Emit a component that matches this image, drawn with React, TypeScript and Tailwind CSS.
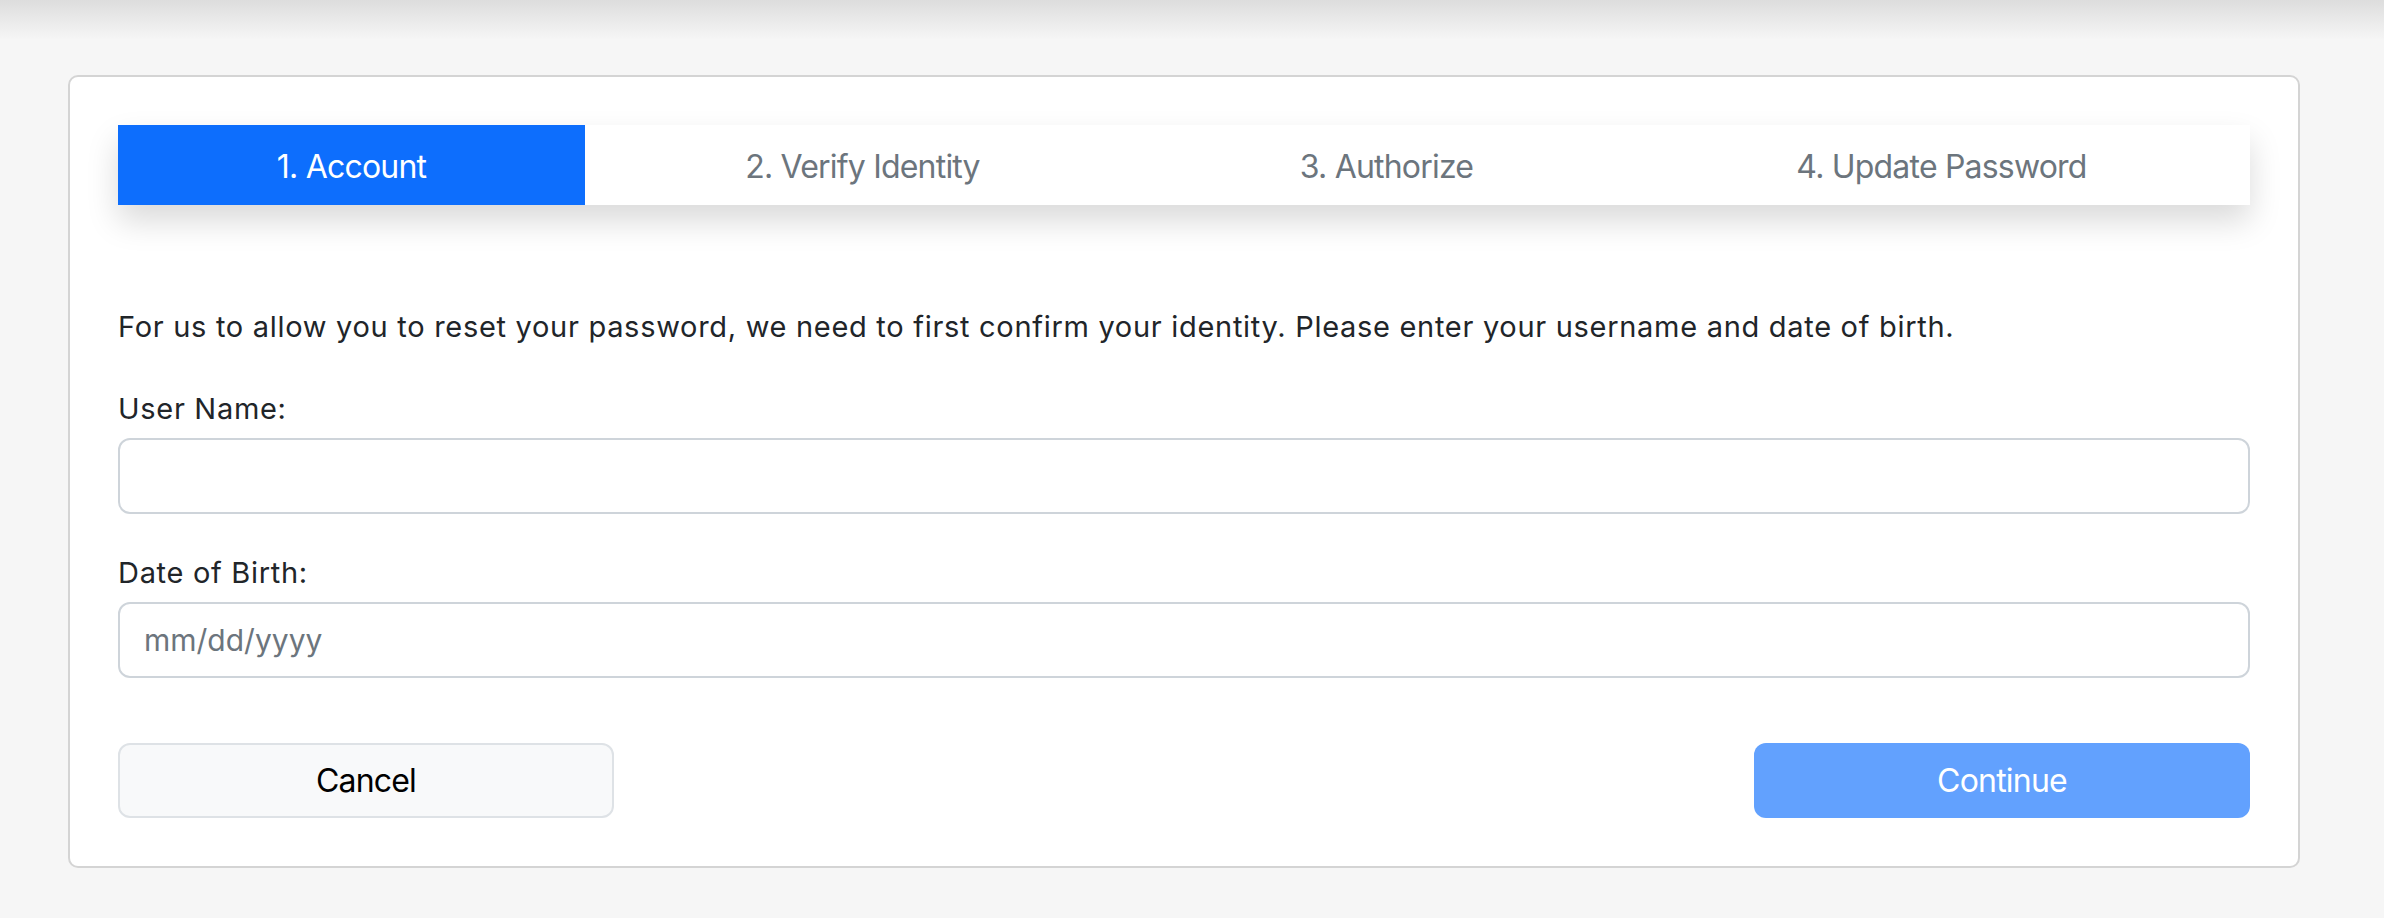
import React from "react";

const font = { fontFamily: 'Inter, "Liberation Sans", Arial, sans-serif' };

export default function App() {
  const steps = ["1. Account", "2. Verify Identity", "3. Authorize", "4. Update Password"];
  return (
    <div className="min-h-screen w-full bg-[#f6f6f6]" style={font}>
      <div className="h-[40px] w-full bg-linear-to-b from-[#dddddd] to-[#f6f6f6]" />
      <div className="pl-[68px] pt-[35px] pb-[50px]">
        <div className="w-[2232px] rounded-[10px] border-2 border-[#d4d4d4] bg-white p-[48px]">
          <div className="grid h-[80px] grid-cols-[467px_555px_493px_1fr] bg-white shadow-[0_16px_32px_rgba(0,0,0,0.15)]">
            {steps.map((s, i) => (
              <div
                key={s}
                className={
                  i === 0
                    ? "flex items-center justify-center bg-[#0d6efd] pt-[4px] text-[32px] tracking-[-0.8px] text-white"
                    : "flex items-center justify-center bg-white pt-[4px] text-[32px] tracking-[-0.8px] text-[#6c757d]"
                }
              >
                {s}
              </div>
            ))}
          </div>

          <p className="mt-[101px] text-[29px] leading-[42px] tracking-[0.7px] text-[#212529]">
            For us to allow you to reset your password, we need to first confirm your identity. Please enter your username and date of birth.
          </p>

          <label className="mt-[40px] block text-[29px] leading-[42px] tracking-[0.7px] text-[#212529]">User Name:</label>
          <input
            type="text"
            className="mt-[8px] block h-[76px] w-full rounded-[12px] border-2 border-[#ced4da] bg-white px-[24px] text-[30px] text-[#212529] outline-none"
          />

          <label className="mt-[38px] block text-[29px] leading-[42px] tracking-[0.7px] text-[#212529]">Date of Birth:</label>
          <input
            type="text"
            placeholder="mm/dd/yyyy"
            className="mt-[8px] block h-[76px] w-full rounded-[12px] border-2 border-[#ced4da] bg-white px-[24px] text-[30px] text-[#212529] outline-none placeholder:text-[#6c757d]"
          />

          <div className="mt-[65px] flex items-center justify-between">
            <button className="flex h-[75px] w-[496px] items-center justify-center rounded-[12px] border-2 border-[#dee2e6] bg-[#f8f9fa] text-[32px] tracking-[-0.8px] text-black">
              Cancel
            </button>
            <button className="flex h-[75px] w-[496px] items-center justify-center rounded-[12px] bg-[#62a1fe] text-[32px] tracking-[-0.8px] text-white">
              Continue
            </button>
          </div>
        </div>
      </div>
    </div>
  );
}
